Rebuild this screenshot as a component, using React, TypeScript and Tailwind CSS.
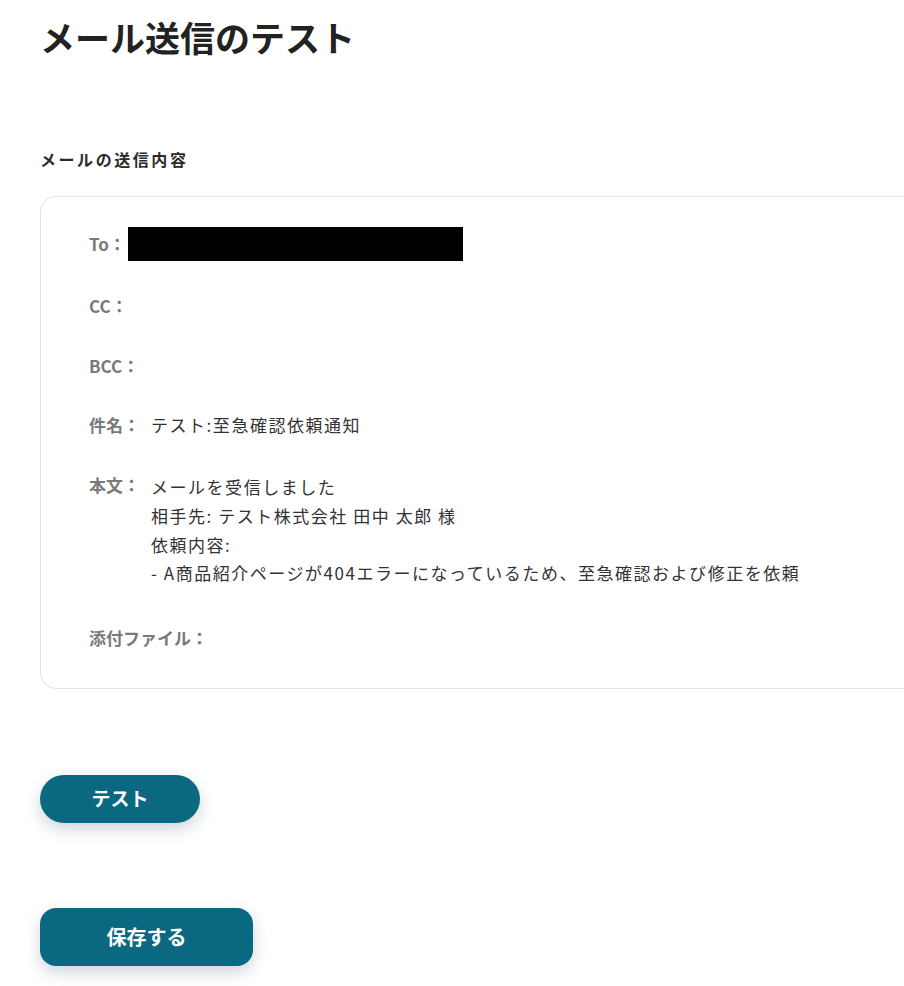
import React from 'react';

const font = { fontFamily: '"Noto Sans CJK JP", "Noto Sans", sans-serif' };

const bodyLines = [
  'メールを受信しました',
  '相手先: テスト株式会社 田中 太郎 様',
  '依頼内容:',
  '- A商品紹介ページが404エラーになっているため、至急確認および修正を依頼',
];

const Label: React.FC<{ children: React.ReactNode }> = ({ children }) => (
  <span className="shrink-0 font-bold text-[#7a7a7a]">{children}</span>
);

const App: React.FC = () => {
  return (
    <div className="w-full min-h-screen overflow-hidden bg-white" style={font}>
      <div className="px-10 pt-[10px] pb-5">
        <h1 className="text-[35px] leading-[54px] font-bold text-[#222222]">メール送信のテスト</h1>

        <h2 className="mt-[83px] text-[16px] leading-6 font-bold text-[#2b2b2b] tracking-[0.16em]">
          メールの送信内容
        </h2>

        <div className="mt-[25px] w-[920px] rounded-2xl border border-[#e2e2e2] pl-12 pt-[30px] pb-[35px] text-[17px] leading-[28.7px] text-[#333333]">
          <div className="flex flex-col gap-[31px]">
            <div className="flex items-center h-[34px]">
              <Label>To：</Label>
              <div className="ml-[2px] w-[335px] h-[34px] bg-black" />
            </div>
            <div className="flex">
              <Label>CC：</Label>
            </div>
            <div className="flex">
              <Label>BCC：</Label>
            </div>
            <div className="flex">
              <Label>件名：</Label>
              <span className="ml-[11px] tracking-[0.09em]">テスト:至急確認依頼通知</span>
            </div>
            <div className="flex">
              <Label>本文：</Label>
              <div className="ml-[11px] flex flex-col pt-[2px] tracking-[0.09em]">
                {bodyLines.map((line) => (
                  <span key={line}>{line}</span>
                ))}
              </div>
            </div>
            <div className="flex pt-[5px]">
              <Label>添付ファイル：</Label>
            </div>
          </div>
        </div>

        <button className="mt-[86px] flex h-12 w-40 items-center justify-center rounded-full bg-[#0b6881] text-[19px] font-bold text-white shadow-[0_6px_16px_rgba(30,60,90,0.22)]">
          テスト
        </button>

        <button className="mt-[85px] flex h-[58px] w-[213px] items-center justify-center rounded-2xl bg-[#0b6881] text-[20px] font-bold text-white shadow-[0_6px_16px_rgba(30,60,90,0.22)]">
          保存する
        </button>
      </div>
    </div>
  );
};

export default App;
